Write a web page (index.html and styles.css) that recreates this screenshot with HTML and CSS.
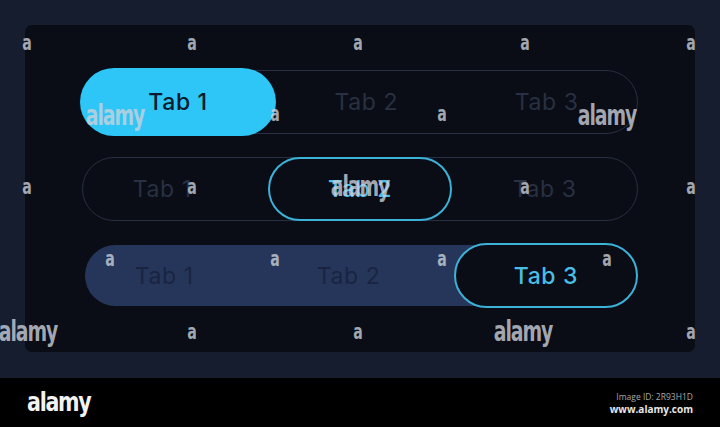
FILE: index.html
```html
<!DOCTYPE html>
<html>
  <head>
    <title>Tabs</title>
    <link rel="stylesheet" href="styles.css">
  </head>
  <body>
    <div class="stage">
      <div class="panel">
        <div class="tabs tabs-filled">
          <div class="tab active">Tab 1</div>
          <div class="tab">Tab 2</div>
          <div class="tab">Tab 3</div>
        </div>
        <div class="tabs tabs-outline">
          <div class="tab tab-left">Tab 1</div>
          <div class="tab active">Tab 2</div>
          <div class="tab">Tab 3</div>
        </div>
        <div class="tabs tabs-shade">
          <div class="tab tab-left">Tab 1</div>
          <div class="tab tab-left">Tab 2</div>
          <div class="tab active">Tab 3</div>
        </div>
      </div>
    </div>

    <footer class="credit">
      <span class="logo">alamy</span>
      <div class="credit-info">
        <span class="image-id">Image ID: 2R93H1D</span>
        <span class="site">www.alamy.com</span>
      </div>
    </footer>

    <!-- watermark layer, sits over everything -->
    <div class="marks">
      <span class="mark" style="left:27px;top:43px">a</span>
      <span class="mark" style="left:192px;top:43px">a</span>
      <span class="mark" style="left:358px;top:43px">a</span>
      <span class="mark" style="left:525px;top:43px">a</span>
      <span class="mark" style="left:691px;top:43px">a</span>
      <span class="mark" style="left:275px;top:114px">a</span>
      <span class="mark" style="left:442px;top:114px">a</span>
      <span class="mark big" style="left:115px;top:116px">alamy</span>
      <span class="mark big" style="left:607px;top:116px">alamy</span>
      <span class="mark" style="left:27px;top:187px">a</span>
      <span class="mark" style="left:192px;top:187px">a</span>
      <span class="mark" style="left:525px;top:187px">a</span>
      <span class="mark" style="left:691px;top:187px">a</span>
      <span class="mark big" style="left:360px;top:187px">alamy</span>
      <span class="mark" style="left:110px;top:259px">a</span>
      <span class="mark" style="left:275px;top:259px">a</span>
      <span class="mark" style="left:442px;top:259px">a</span>
      <span class="mark" style="left:607px;top:259px">a</span>
      <span class="mark big" style="left:28px;top:332px">alamy</span>
      <span class="mark big" style="left:523px;top:332px">alamy</span>
      <span class="mark" style="left:192px;top:332px">a</span>
      <span class="mark" style="left:358px;top:332px">a</span>
      <span class="mark" style="left:691px;top:332px">a</span>
    </div>
  </body>
</html>
```

FILE: styles.css
```css
body {
  margin: 0;
  width: 720px;
  height: 427px;
  overflow: hidden;
  background-color: #161d2e;
  font-family: Inter, 'Noto Sans', sans-serif;
  position: relative;
}

.stage {
  height: 378px;
  padding: 25px 25px 0 25px;
  box-sizing: border-box;
}

.panel {
  height: 327px;
  background-color: #0a0d15;
  border-radius: 7px;
  padding: 45px 57px 0 57px;
  box-sizing: border-box;
  display: flex;
  flex-direction: column;
  gap: 23px;
}

.tabs {
  height: 64px;
  border-radius: 32px;
  display: flex;
  box-sizing: border-box;
}

.tab {
  flex: 0 0 33.333%;
  display: flex;
  align-items: center;
  justify-content: center;
  font-size: 23px;
  letter-spacing: 0.6px;
  font-weight: 400;
  color: #283043;
  border-radius: 34px;
  box-sizing: border-box;
}

.tab-left {
  padding-right: 26px;
}

/* row 1: solid cyan active */
.tabs-filled {
  border: 1.5px solid #262f43;
}

.tabs-filled .tab {
  flex: 1 1 0;
}

.tabs-filled .active {
  flex: 0 0 196px;
  background-color: #2dc6f6;
  color: #0b1a2d;
  font-weight: 500;
  margin: -3px 0 -3px -3px;
}

/* row 2: outlined active */
.tabs-outline {
  border: 1.5px solid #262f43;
}

.tabs-outline .active {
  border: 2px solid #3cb2d9;
  color: #49bde6;
  font-weight: 500;
  margin: -1px 0;
}

/* row 3: shaded track, outlined active */
.tabs-shade {
  height: 61px;
  margin-top: 1px;
  margin-left: 3px;
  background: linear-gradient(to right, #26365a 75%, transparent 75%);
}

.tabs-shade .tab {
  color: #1a2440;
}

.tabs-shade .active {
  border: 2px solid #3cb2d9;
  background-color: #0a0d15;
  color: #49bde6;
  font-weight: 500;
  margin: -2px 0 -2px 0;
}

.credit {
  height: 49px;
  background-color: #000;
  display: flex;
  align-items: center;
  justify-content: space-between;
  padding: 0 27px;
  box-sizing: border-box;
}

.logo {
  font-family: 'DejaVu Sans Condensed', 'DejaVu Sans', sans-serif;
  font-weight: 700;
  font-size: 27px;
  letter-spacing: -1.5px;
  color: #f2f2f2;
  transform: scaleX(0.85);
  transform-origin: left center;
  margin-top: -3px;
}

.credit-info {
  display: flex;
  flex-direction: column;
  align-items: flex-end;
  font-family: 'Open Sans', sans-serif;
  line-height: 13px;
}

.image-id {
  font-size: 8.5px;
  color: #a9a9a9;
}

.site {
  font-size: 10px;
  font-weight: 700;
  color: #e8e8e8;
}

.marks {
  position: absolute;
  inset: 0;
  pointer-events: none;
}

.mark {
  position: absolute;
  transform: translate(-50%, -50%) scaleX(0.75);
  font-family: 'DejaVu Sans Condensed', 'DejaVu Sans', sans-serif;
  font-weight: 700;
  font-size: 21px;
  color: rgba(205, 210, 220, 0.78);
  line-height: 1;
}

.mark.big {
  font-size: 28px;
  letter-spacing: -1.5px;
}
```
